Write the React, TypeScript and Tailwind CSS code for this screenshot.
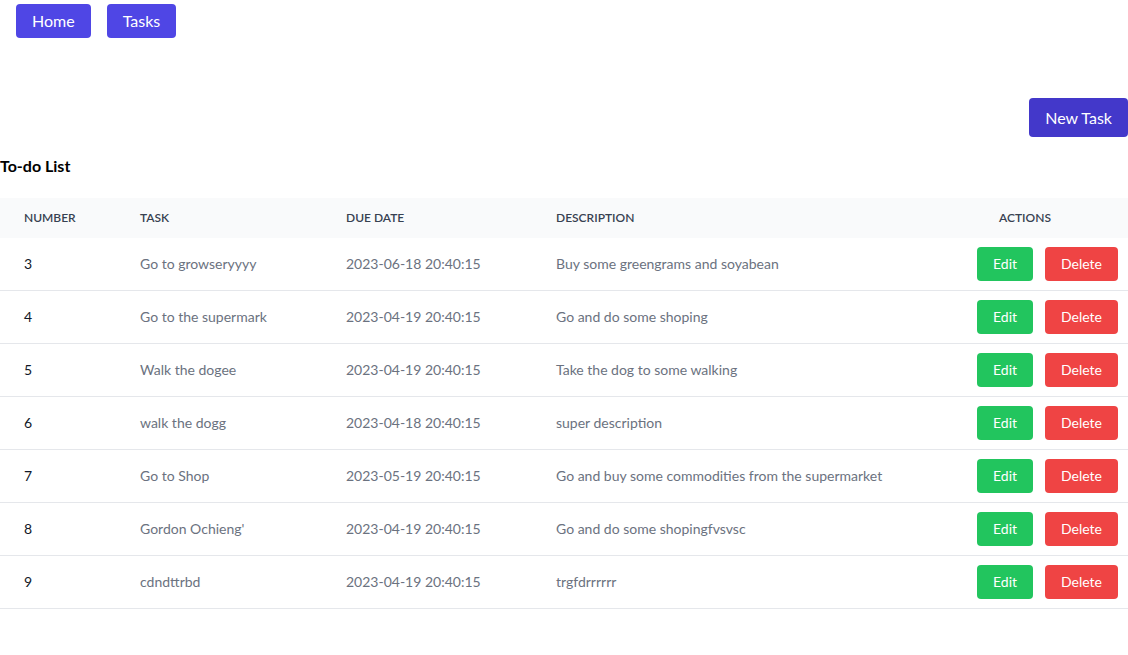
const tasks = [
  { id: 3, task: 'Go to growseryyyy', due: '2023-06-18 20:40:15', desc: 'Buy some greengrams and soyabean' },
  { id: 4, task: 'Go to the supermark', due: '2023-04-19 20:40:15', desc: 'Go and do some shoping' },
  { id: 5, task: 'Walk the dogee', due: '2023-04-19 20:40:15', desc: 'Take the dog to some walking' },
  { id: 6, task: 'walk the dogg', due: '2023-04-18 20:40:15', desc: 'super description' },
  { id: 7, task: 'Go to Shop', due: '2023-05-19 20:40:15', desc: 'Go and buy some commodities from the supermarket' },
  { id: 8, task: "Gordon Ochieng'", due: '2023-04-19 20:40:15', desc: 'Go and do some shopingfvsvsc' },
  { id: 9, task: 'cdndttrbd', due: '2023-04-19 20:40:15', desc: 'trgfdrrrrrr' },
];

const cols = 'grid grid-cols-[116px_206px_210px_1fr_206px]';

export default function App() {
  return (
    <div className="min-h-[655px] bg-white font-['Lato',sans-serif] text-[#111827]">
      <nav className="flex gap-4 px-4 pt-1">
        <button className="h-[34px] rounded bg-[#4f46e5] px-4 text-base text-white">Home</button>
        <button className="h-[34px] rounded bg-[#4f46e5] px-4 text-base text-white">Tasks</button>
      </nav>

      <div className="mt-[60px] flex justify-end">
        <button className="h-[39px] rounded bg-[#4338ca] px-4 text-base text-white">New Task</button>
      </div>

      <h1 className="mt-[17px] text-base font-bold leading-6 text-black">To-do List</h1>

      <div className="mt-[20px]">
        <div className={`${cols} h-10 items-center bg-[#f9fafb] text-xs font-semibold uppercase text-[#374151]`}>
          <div className="pl-6">Number</div>
          <div className="pl-6">Task</div>
          <div className="pl-6">Due Date</div>
          <div className="pl-6">Description</div>
          <div className="text-center">Actions</div>
        </div>
        {tasks.map((t) => (
          <div key={t.id} className={`${cols} h-[53px] items-center border-b border-[#e5e7eb] text-sm`}>
            <div className="pl-6 text-[#111827]">{t.id}</div>
            <div className="pl-6 text-[#6b7280]">{t.task}</div>
            <div className="pl-6 text-[#6b7280]">{t.due}</div>
            <div className="pl-6 text-[#6b7280]">{t.desc}</div>
            <div className="flex justify-end gap-3 pr-[10px]">
              <button className="h-[34px] rounded bg-[#22c55e] px-4 text-sm text-white">Edit</button>
              <button className="h-[34px] rounded bg-[#ef4444] px-4 text-sm text-white">Delete</button>
            </div>
          </div>
        ))}
      </div>
    </div>
  );
}
